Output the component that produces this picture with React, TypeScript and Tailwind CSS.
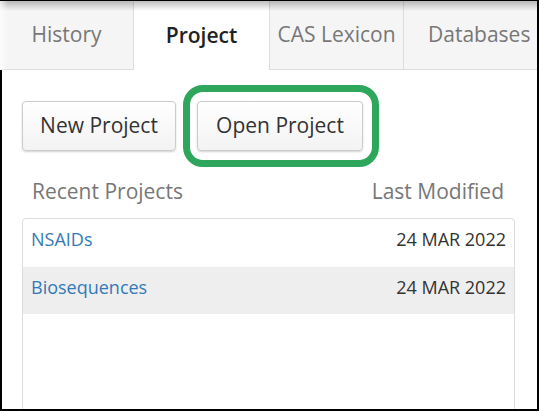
import React from 'react';

const tabs = [
  { label: 'History', width: 'w-[133px] justify-center', active: false },
  { label: 'Project', width: 'w-[136px] justify-center', active: true },
  { label: 'CAS Lexicon', width: 'w-[134px] justify-center', active: false },
  { label: 'Databases', width: 'w-[134px] justify-start pl-[24px]', active: false },
];

const projects = [
  { name: 'NSAIDs', modified: '24 MAR 2022' },
  { name: 'Biosequences', modified: '24 MAR 2022' },
];

export default function App() {
  return (
    <div className="relative w-[539px] h-[411px] overflow-hidden bg-white border-t border-r-2 border-b-2 border-black font-['Open_Sans',sans-serif]">
      {/* screenshot shadow along the top edge */}
      <div className="pointer-events-none absolute inset-x-0 top-0 h-[10px] bg-gradient-to-b from-black/25 to-transparent" />
      <div className="pointer-events-none absolute left-0 top-0 h-[69px] w-[8px] bg-gradient-to-r from-white/70 to-transparent" />

      <div className="flex h-[69px]">
        {tabs.map((tab, i) => (
          <div
            key={tab.label}
            className={`${tab.width} flex items-center text-[21px] border-[#ddd] ${i > 0 ? 'border-l' : ''} ${
              tab.active
                ? 'bg-white text-[#222] font-semibold'
                : 'bg-[#f5f5f5] text-[#777] border-b'
            }`}
          >
            {tab.label}
          </div>
        ))}
      </div>

      <div className="h-full border-l-2 border-black pl-[20px] pr-[22px] pt-[31px]">
        <div className="flex items-center gap-[21px]">
          <button className="w-[154px] h-[50px] rounded-[4px] border border-[#ccc] bg-gradient-to-b from-white to-[#f3f3f3] text-[21px] text-[#333] shadow-[0_1px_2px_rgba(0,0,0,0.18)]">
            New Project
          </button>
          <div className="relative">
            <button className="w-[166px] h-[50px] rounded-[4px] border border-[#ccc] bg-gradient-to-b from-white to-[#f3f3f3] text-[21px] text-[#333] shadow-[0_1px_2px_rgba(0,0,0,0.18)]">
              Open Project
            </button>
            {/* highlight ring */}
            <span className="pointer-events-none absolute -left-[14px] -right-[16px] -top-[16px] -bottom-[16px] rounded-[20px] border-[7px] border-[#2ea65b]" />
          </div>
        </div>

        <div className="mt-[26px] flex justify-between pl-[10px] pr-[11px] text-[21px] leading-[28px] text-[#777]">
          <span>Recent Projects</span>
          <span>Last Modified</span>
        </div>

        <div className="mt-[13px] h-[220px] rounded-[4px] border border-[#ddd] text-[18px]">
          {projects.map((p, i) => (
            <div
              key={p.name}
              className={`flex items-center justify-between pl-[8px] pr-[8px] pb-[7px] ${
                i === 1 ? 'h-[47px] bg-[#eee]' : 'h-[48px]'
              }`}
            >
              <span className="text-[#337ab7]">{p.name}</span>
              <span className="text-[#333]">{p.modified}</span>
            </div>
          ))}
        </div>
      </div>
    </div>
  );
}
